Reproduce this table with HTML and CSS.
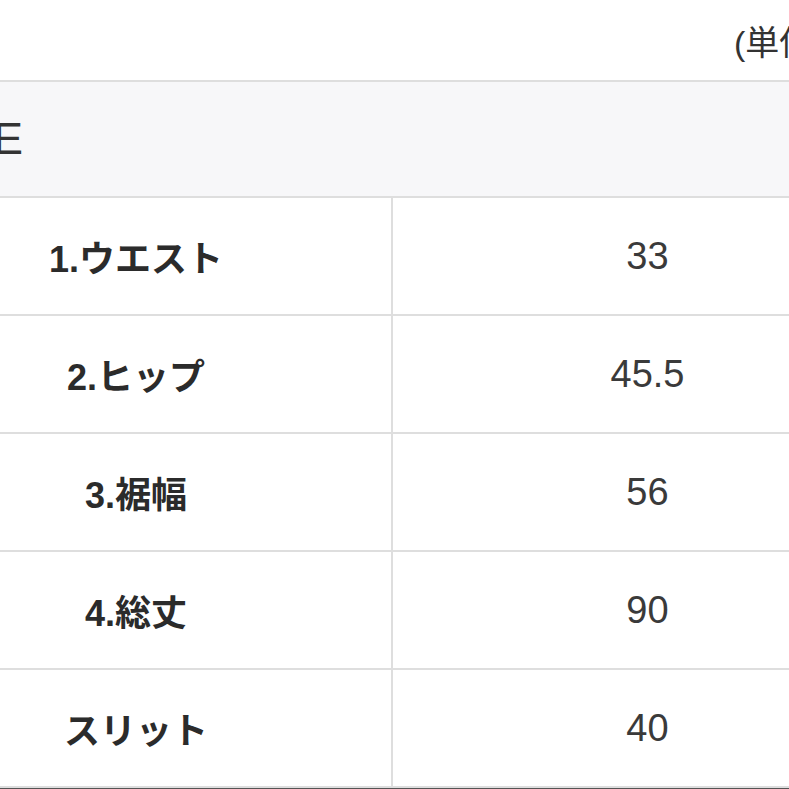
FILE: index.html
```html
<!DOCTYPE html>
<html lang="ja">
<head>
<meta charset="utf-8">
<title>サイズ表</title>
<link rel="stylesheet" href="styles.css">
</head>
<body>
<div class="page">
  <div class="unit">(単位:cm)</div>
  <div class="sizes">
    <div class="head">SIZE</div>
    <div class="row"><div class="label">1.ウエスト</div><div class="value">33</div></div>
    <div class="row"><div class="label">2.ヒップ</div><div class="value">45.5</div></div>
    <div class="row"><div class="label">3.裾幅</div><div class="value">56</div></div>
    <div class="row"><div class="label">4.総丈</div><div class="value">90</div></div>
    <div class="row"><div class="label">スリット</div><div class="value">40</div></div>
  </div>
  <div class="edge"></div>
</div>
</body>
</html>
```
FILE: styles.css
```css
html, body {
  margin: 0;
  padding: 0;
  background: #ffffff;
}
.page {
  width: 789px;
  height: 789px;
  overflow: hidden;
  font-family: "Liberation Sans", "Noto Sans CJK JP", sans-serif;
  color: #333333;
}
.unit {
  height: 80px;
  display: flex;
  align-items: center;
  padding-left: 734px;
  font-size: 34px;
  white-space: nowrap;
  color: #333333;
}
.sizes {
  margin-left: -119px;
  width: 1021px;
  border-top: 2px solid #dedede;
}
.head {
  height: 116px;
  box-sizing: border-box;
  background: #f7f7f9;
  border-bottom: 2px solid #dedede;
  display: flex;
  align-items: center;
  padding-left: 42px;
  font-size: 45px;
  color: #333333;
}
.row {
  display: grid;
  grid-template-columns: 512px 1fr;
  height: 118px;
  box-sizing: border-box;
  border-bottom: 2px solid #dedede;
}
.label {
  border-right: 2px solid #dedede;
  display: flex;
  align-items: center;
  justify-content: center;
  font-weight: 700;
  font-size: 36px;
  color: #2b2b2b;
}
.value {
  display: flex;
  align-items: center;
  justify-content: center;
  font-size: 38px;
  color: #3a3a3a;
}
.edge {
  height: 1px;
  background: #555555;
}
```
